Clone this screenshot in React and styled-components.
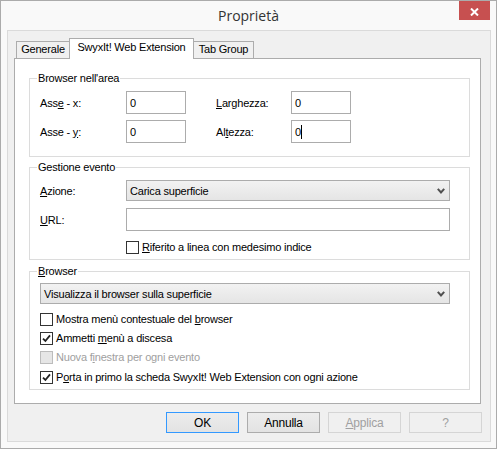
import React from "react";
import styled, { createGlobalStyle } from "styled-components";

const GlobalStyle = createGlobalStyle`
  html, body {
    margin: 0;
    padding: 0;
    background: #ffffff;
  }
  * {
    box-sizing: border-box;
  }
`;

const Window = styled.div`
  width: 497px;
  height: 449px;
  border: 1px solid #ababab;
  background: #f9f9f9;
  font-family: "Liberation Sans", Arial, sans-serif;
  font-size: 11px;
  letter-spacing: -0.2px;
  color: #000;
  display: flex;
  flex-direction: column;
`;

const TitleBar = styled.div`
  height: 29px;
  display: flex;
  align-items: flex-start;
  flex-shrink: 0;
`;

const Title = styled.div`
  flex: 1;
  padding-left: 37px;
  text-align: center;
  line-height: 29px;
  font-family: "Open Sans", "Noto Sans", sans-serif;
  font-size: 14px;
  letter-spacing: 0;
  color: #333333;
`;

const CloseButton = styled.div`
  width: 31px;
  height: 19px;
  margin-right: 6px;
  background: #c75050;
  display: flex;
  align-items: center;
  justify-content: center;
  padding-top: 2px;
`;

const Client = styled.div`
  width: 484px;
  height: 412px;
  margin-left: 6px;
  border: 1px solid #dadada;
  background: #f0f0f0;
  padding: 7px 9px 8px 6px;
  display: flex;
  flex-direction: column;
`;

const TabStrip = styled.div`
  height: 20px;
  display: flex;
  align-items: flex-end;
  padding-left: 2px;
`;

const Tab = styled.div`
  position: relative;
  height: ${(p) => (p.$active ? "21px" : "17px")};
  margin-bottom: ${(p) => (p.$active ? "-1px" : "0")};
  width: ${(p) => p.$w}px;
  border: 1px solid #acacac;
  border-bottom: none;
  border-left-width: ${(p) => (p.$noLeft ? "0" : "1px")};
  border-right-width: ${(p) => (p.$noRight ? "0" : "1px")};
  background: ${(p) => (p.$active ? "#ffffff" : "#f0f0f0")};
  z-index: ${(p) => (p.$active ? 1 : 0)};
  text-align: center;
  line-height: ${(p) => (p.$active ? "17px" : "15px")};
  white-space: nowrap;
`;

const TabPanel = styled.div`
  height: 346px;
  border: 1px solid #acacac;
  background: #ffffff;
  padding: 19px 10px 0 14px;
  display: flex;
  flex-direction: column;
`;

const GroupBox = styled.div`
  border: 1px solid #dcdcdc;
  margin-top: ${(p) => p.$mt || 0}px;
`;

const Legend = styled.div`
  display: table;
  margin: -7px 0 0 7px;
  padding: 0 1px;
  background: #ffffff;
  line-height: 13px;
  white-space: nowrap;
`;

const GroupBody = styled.div`
  padding: ${(p) => p.$pt}px 0 ${(p) => p.$pb}px 10px;
`;

const FieldRow = styled.div`
  display: flex;
  align-items: center;
  margin-top: ${(p) => p.$mt || 0}px;
`;

const FieldLabel = styled.div`
  width: ${(p) => p.$w}px;
  flex-shrink: 0;
  white-space: nowrap;
`;

const TextBox = styled.div`
  width: ${(p) => p.$w}px;
  height: 23px;
  border: 1px solid #acacac;
  background: #ffffff;
  padding-left: 3px;
  display: flex;
  align-items: center;
  flex-shrink: 0;
`;

const Caret = styled.span`
  display: inline-block;
  width: 1px;
  height: 14px;
  background: #000;
  margin-left: 0px;
`;

const Spacer = styled.div`
  width: ${(p) => p.$w}px;
  flex-shrink: 0;
`;

const Select = styled.div`
  width: ${(p) => p.$w}px;
  height: 21px;
  border: 1px solid #acacac;
  background: linear-gradient(#f2f2f2, #e5e5e5);
  padding: 0 4px 0 3px;
  display: flex;
  align-items: center;
  justify-content: space-between;
  flex-shrink: 0;
`;

const CheckRow = styled.div`
  display: flex;
  align-items: center;
  height: 13px;
  margin-top: ${(p) => p.$mt || 0}px;
  padding-left: ${(p) => p.$indent || 0}px;
  color: ${(p) => (p.$disabled ? "#a0a0a0" : "#000")};
`;

const CheckBox = styled.div`
  width: 13px;
  height: 13px;
  border: 1px solid ${(p) => (p.$disabled ? "#bcbcbc" : "#333333")};
  background: ${(p) => (p.$disabled ? "#e6e6e6" : "#ffffff")};
  margin-right: 3px;
  display: flex;
  align-items: center;
  justify-content: center;
  flex-shrink: 0;
`;

const CheckLabel = styled.span`
  white-space: nowrap;
  line-height: 13px;
`;

const Key = styled.span`
  text-decoration: underline;
  text-underline-offset: 1px;
`;

const ButtonRow = styled.div`
  display: flex;
  justify-content: flex-end;
  gap: 8px;
  margin-top: 8px;
  margin-right: -1px;
`;

const Button = styled.div`
  width: 73px;
  height: 21px;
  border: 1px solid
    ${(p) => (p.$default ? "#3399ff" : p.$disabled ? "#d5d5d5" : "#acacac")};
  background: ${(p) =>
    p.$disabled ? "#f0f0f0" : "linear-gradient(#ececec, #e3e3e3)"};
  color: ${(p) => (p.$disabled ? "#a0a0a0" : "#000")};
  display: flex;
  align-items: center;
  justify-content: center;
  font-size: 12px;
`;

const Chevron = () => (
  <svg width="8" height="6" viewBox="0 0 8 6">
    <path d="M0.8 0.8 L4 4.4 L7.2 0.8" fill="none" stroke="#505050" strokeWidth="2" />
  </svg>
);

const Check = () => (
  <svg width="9" height="9" viewBox="0 0 9 9">
    <path d="M1 4.6 L3.4 7 L8 1.4" fill="none" stroke="#222" strokeWidth="1.8" />
  </svg>
);

const CloseIcon = () => (
  <svg width="9" height="8" viewBox="0 0 9 8">
    <path d="M1 0.5 L8 7.5 M8 0.5 L1 7.5" stroke="#ffffff" strokeWidth="2" />
  </svg>
);

function CheckItem({ checked, disabled, mt, indent, children }) {
  return (
    <CheckRow $mt={mt} $indent={indent} $disabled={disabled}>
      <CheckBox $disabled={disabled}>{checked ? <Check /> : null}</CheckBox>
      <CheckLabel>{children}</CheckLabel>
    </CheckRow>
  );
}

export default function App() {
  return (
    <>
      <GlobalStyle />
      <Window>
        <TitleBar>
          <Title>Proprietà</Title>
          <CloseButton>
            <CloseIcon />
          </CloseButton>
        </TitleBar>

        <Client>
          <TabStrip>
            <Tab $w={53} $noRight>Generale</Tab>
            <Tab $w={125} $active>SwyxIt! Web Extension</Tab>
            <Tab $w={60} $noLeft>Tab Group</Tab>
          </TabStrip>

          <TabPanel>
            <GroupBox>
              <Legend>Browser nell'area</Legend>
              <GroupBody $pt={6} $pb={13}>
                <FieldRow>
                  <FieldLabel $w={86}>
                    Ass<Key>e</Key> - x:
                  </FieldLabel>
                  <TextBox $w={60}>0</TextBox>
                  <Spacer $w={30} />
                  <FieldLabel $w={75}>
                    <Key>L</Key>arghezza:
                  </FieldLabel>
                  <TextBox $w={60}>0</TextBox>
                </FieldRow>
                <FieldRow $mt={6}>
                  <FieldLabel $w={86}>
                    Asse - <Key>y</Key>:
                  </FieldLabel>
                  <TextBox $w={60}>0</TextBox>
                  <Spacer $w={30} />
                  <FieldLabel $w={75}>
                    Al<Key>t</Key>ezza:
                  </FieldLabel>
                  <TextBox $w={60}>
                    0<Caret />
                  </TextBox>
                </FieldRow>
              </GroupBody>
            </GroupBox>

            <GroupBox $mt={10}>
              <Legend>Gestione evento</Legend>
              <GroupBody $pt={6} $pb={5}>
                <FieldRow>
                  <FieldLabel $w={86}>
                    <Key>A</Key>zione:
                  </FieldLabel>
                  <Select $w={324}>
                    <span>Carica superficie</span>
                    <Chevron />
                  </Select>
                </FieldRow>
                <FieldRow $mt={7}>
                  <FieldLabel $w={86}>
                    <Key>U</Key>RL:
                  </FieldLabel>
                  <TextBox $w={324} />
                </FieldRow>
                <CheckItem mt={10} indent={86}>
                  <Key>R</Key>iferito a linea con medesimo indice
                </CheckItem>
              </GroupBody>
            </GroupBox>

            <GroupBox $mt={11}>
              <Legend>
                <Key>B</Key>rowser
              </Legend>
              <GroupBody $pt={5} $pb={5}>
                <Select $w={410}>
                  <span>Visualizza il browser sulla superficie</span>
                  <Chevron />
                </Select>
                <CheckItem mt={9}>
                  Mostra menù contestuale del <Key>b</Key>rowser
                </CheckItem>
                <CheckItem mt={6} checked>
                  Ammetti <Key>m</Key>enù a discesa
                </CheckItem>
                <CheckItem mt={6} disabled>
                  Nuova f<Key>i</Key>nestra per ogni evento
                </CheckItem>
                <CheckItem mt={7} checked>
                  P<Key>o</Key>rta in primo la scheda SwyxIt! Web Extension con ogni azione
                </CheckItem>
              </GroupBody>
            </GroupBox>
          </TabPanel>

          <ButtonRow>
            <Button $default>OK</Button>
            <Button>Annulla</Button>
            <Button $disabled>
              <Key>A</Key>pplica
            </Button>
            <Button $disabled>?</Button>
          </ButtonRow>
        </Client>
      </Window>
    </>
  );
}
